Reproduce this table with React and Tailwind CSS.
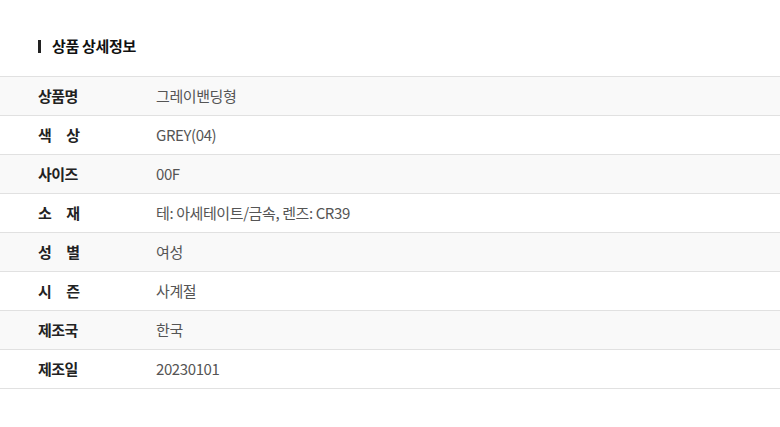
import React from 'react';

const rows = [
  { label: '상품명', value: '그레이밴딩형' },
  { label: ['색', '상'], value: 'GREY(04)' },
  { label: '사이즈', value: '00F' },
  { label: ['소', '재'], value: '테: 아세테이트/금속, 렌즈: CR39' },
  { label: ['성', '별'], value: '여성' },
  { label: ['시', '즌'], value: '사계절' },
  { label: '제조국', value: '한국' },
  { label: '제조일', value: '20230101' },
];

const App = () => {
  return (
    <div
      className="w-[780px] h-[427px] bg-white"
      style={{ fontFamily: '"Noto Sans CJK KR", "Noto Sans", sans-serif' }}
    >
      {/* Title */}
      <div className="h-[76px] flex items-center px-[38px] pt-[16px]">
        <span className="w-[3px] h-[13px] bg-[#222]" />
        <h2 className="ml-[11px] text-[15px] font-bold text-[#111] tracking-[-0.3px]">상품 상세정보</h2>
      </div>

      {/* Spec table */}
      <div className="border-t border-[#e1e1e1]">
        {rows.map((row, i) => (
          <div
            key={i}
            className={`flex items-center h-[39px] border-b border-[#e1e1e1] ${i % 2 === 0 ? 'bg-[#f9f9f9]' : 'bg-white'}`}
          >
            <div className="w-[156px] pl-[38px] text-[15px] font-bold text-[#222]">
              {Array.isArray(row.label) ? (
                <span className="flex justify-between w-[42px]">
                  <span>{row.label[0]}</span>
                  <span>{row.label[1]}</span>
                </span>
              ) : (
                <span className="tracking-[-0.5px]">{row.label}</span>
              )}
            </div>
            <div className="text-[15px] text-[#555] tracking-[-0.4px]">{row.value}</div>
          </div>
        ))}
      </div>
    </div>
  );
};

export default App;
